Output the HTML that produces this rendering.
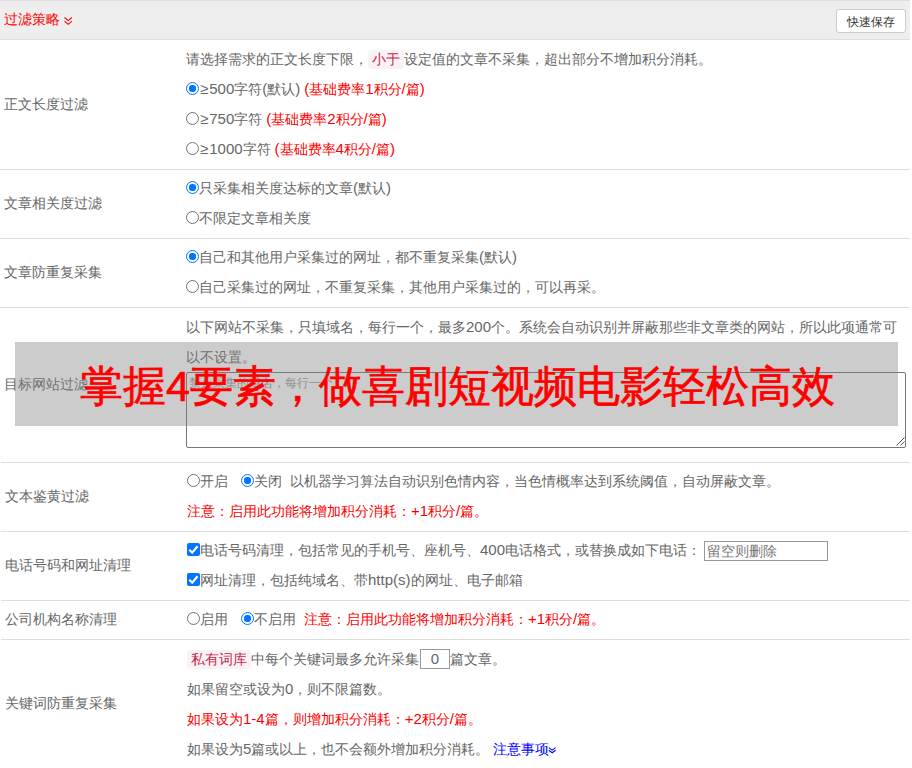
<!DOCTYPE html>
<html><head><meta charset="utf-8">
<style>
*{box-sizing:border-box}
html,body{margin:0;padding:0}
body{width:912px;height:768px;overflow:hidden;background:#fff;position:relative;font-family:"Liberation Sans",sans-serif;font-size:14px;color:#666}
.hdr{position:absolute;left:0;top:0;width:910px;height:40px;background:#eee;border-top:1px solid #ddd;border-bottom:1px solid #ddd}
.hdr .t{position:absolute;left:4px;top:8px;line-height:20px;color:#f00;font-size:14px}
.hdr svg{position:absolute;left:64px;top:16px}
.btn{position:absolute;left:836px;top:8px;width:70px;height:24px;border:1px solid #ccc;border-radius:3px;background:#fff;color:#333;font-size:12px;line-height:25px;text-align:center}
.row{position:absolute;left:0;width:910px;border-bottom:1px solid #ddd}
.lab{position:absolute;left:4px;top:0;bottom:0;display:flex;align-items:center;white-space:nowrap}
.cnt{position:absolute;left:186px;width:722px}
.ln{height:30px;line-height:30px;white-space:nowrap;position:relative}
.red{color:#f00}
i.l{font-style:normal;font-size:15px}
i.g{font-style:normal;margin:0 1px}
.blue{color:#00f}
.rd{display:inline-block;width:13px;height:13px;border-radius:50%;border:1px solid #727272;background:#fff;vertical-align:middle;position:relative;top:-2px}
.rd.on{border:1px solid #0075ff;}
.rd.on:after{content:"";position:absolute;left:2px;top:2px;width:7px;height:7px;border-radius:3px;background:#0075ff}
.cb{display:inline-block;width:13px;height:13px;border-radius:2px;background:#0075ff;vertical-align:middle;position:relative;top:-2px}
.cb svg{position:absolute;left:0;top:0}
code{font-family:"Liberation Sans",sans-serif;font-size:14px;color:#c7254e;background:#f9f2f4;border-radius:4px;padding:0 4px;display:inline-block;height:19px;line-height:19px;vertical-align:top;margin-top:6px}
.ta{position:absolute;left:186px;top:372px;width:720px;height:76px;border:1px solid #767676;border-radius:2px;background:#fff}
.ta .ph{position:absolute;left:2px;top:2px;font-size:12px;line-height:16px;color:#999}
.inp{display:inline-block;border:1px solid #999;background:#fff;vertical-align:top;position:relative;line-height:18px;font-size:14px;color:#666}
.ov{position:absolute;left:15px;top:342px;width:883px;height:84px;background:rgba(128,128,128,0.4);color:#f00;font-size:43px;-webkit-text-stroke:0.7px #f00;line-height:89px;text-indent:2px;text-align:center;white-space:nowrap}
</style></head><body>

<div class="hdr">
  <div class="t">过滤策略</div>
  <svg width="9" height="8" viewBox="0 0 9 8"><path d="M0.5 0.5 L4.2 3.6 L7.9 0.5 M0.5 4.2 L4.2 7.3 L7.9 4.2" fill="none" stroke="#f00" stroke-width="1.1"/></svg>
  <div class="btn">快速保存</div>
</div>

<!-- row1 -->
<div class="row" style="top:40px;height:130px">
  <div class="lab">正文长度过滤</div>
  <div class="cnt" style="top:4px">
    <div class="ln">请选择需求的正文长度下限，<code>小于</code>设定值的文章不采集，超出部分不增加积分消耗。</div>
    <div class="ln"><span class="rd on"></span><i class="l"><i class="g">≥</i>500</i>字符<i class="l">(</i>默认<i class="l">)</i> <span class="red"><i class="l">(</i>基础费率<i class="l">1</i>积分<i class="l">/</i>篇<i class="l">)</i></span></div>
    <div class="ln"><span class="rd"></span><i class="l"><i class="g">≥</i>750</i>字符 <span class="red"><i class="l">(</i>基础费率<i class="l">2</i>积分<i class="l">/</i>篇<i class="l">)</i></span></div>
    <div class="ln"><span class="rd"></span><i class="l"><i class="g">≥</i>1000</i>字符 <span class="red"><i class="l">(</i>基础费率<i class="l">4</i>积分<i class="l">/</i>篇<i class="l">)</i></span></div>
  </div>
</div>

<!-- row2 -->
<div class="row" style="top:170px;height:69px">
  <div class="lab">文章相关度过滤</div>
  <div class="cnt" style="top:3px">
    <div class="ln"><span class="rd on"></span>只采集相关度达标的文章<i class="l">(</i>默认<i class="l">)</i></div>
    <div class="ln"><span class="rd"></span>不限定文章相关度</div>
  </div>
</div>

<!-- row3 -->
<div class="row" style="top:239px;height:69px">
  <div class="lab">文章防重复采集</div>
  <div class="cnt" style="top:3px">
    <div class="ln"><span class="rd on"></span>自己和其他用户采集过的网址，都不重复采集<i class="l">(</i>默认<i class="l">)</i></div>
    <div class="ln"><span class="rd"></span>自己采集过的网址，不重复采集，其他用户采集过的，可以再采。</div>
  </div>
</div>

<!-- row4 -->
<div class="row" style="left:1px;width:909px;top:308px;height:155px">
  <div class="lab" style="left:3px">目标网站过滤</div>
  <div class="cnt" style="top:4px;left:185px">
    <div class="ln">以下网站不采集，只填域名，每行一个，最多<i class="l">200</i>个。系统会自动识别并屏蔽那些非文章类的网站，所以此项通常可</div>
    <div class="ln">以不设置。</div>
  </div>
</div>
<div class="ta"><div class="ph">禁止采集的域名，每行一个</div><svg width="12" height="12" viewBox="0 0 12 12" style="position:absolute;right:-1px;bottom:0px"><path d="M2.5 10.5 L10.5 2.5 M6.5 10.5 L10.5 6.5" stroke="#555" stroke-width="1" fill="none"/></svg></div>

<!-- row5 -->
<div class="row" style="left:1px;width:909px;top:463px;height:69px">
  <div class="lab">文本鉴黄过滤</div>
  <div class="cnt" style="top:3px">
    <div class="ln"><span class="rd"></span>开启<span class="rd on" style="margin-left:13px"></span>关闭<span style="margin-left:8px"></span>以机器学习算法自动识别色情内容，当色情概率达到系统阈值，自动屏蔽文章。</div>
    <div class="ln red">注意：启用此功能将增加积分消耗：<i class="l">+1</i>积分<i class="l">/</i>篇。</div>
  </div>
</div>

<!-- row6 -->
<div class="row" style="left:1px;width:909px;top:532px;height:69px">
  <div class="lab">电话号码和网址清理</div>
  <div class="cnt" style="top:3px">
    <div class="ln"><span class="cb"><svg width="13" height="13" viewBox="0 0 13 13"><path d="M2.3 6.8 L5.2 9.6 L10.6 3.3" fill="none" stroke="#fff" stroke-width="2.2"/></svg></span>电话号码清理，包括常见的手机号、座机号、<i class="l">400</i>电话格式，或替换成如下电话： <span class="inp" style="width:124px;height:20px;margin-top:6px;margin-left:-1px;color:#757575;padding-left:2px">留空则删除</span></div>
    <div class="ln"><span class="cb"><svg width="13" height="13" viewBox="0 0 13 13"><path d="M2.3 6.8 L5.2 9.6 L10.6 3.3" fill="none" stroke="#fff" stroke-width="2.2"/></svg></span>网址清理，包括纯域名、带<i class="l">http(s)</i>的网址、电子邮箱</div>
  </div>
</div>

<!-- row7 -->
<div class="row" style="left:1px;width:909px;top:601px;height:39px">
  <div class="lab">公司机构名称清理</div>
  <div class="cnt" style="top:3px">
    <div class="ln"><span class="rd"></span>启用<span class="rd on" style="margin-left:13px"></span>不启用<span class="red" style="margin-left:8px">注意：启用此功能将增加积分消耗：<i class="l">+1</i>积分<i class="l">/</i>篇。</span></div>
  </div>
</div>

<!-- row8 -->
<div class="row" style="left:1px;width:909px;top:640px;height:140px;border-bottom:0">
  <div class="lab" style="bottom:12px">关键词防重复采集</div>
  <div class="cnt" style="top:4px">
    <div class="ln"><code>私有词库</code>中每个关键词最多允许采集<span class="inp" style="width:30px;height:20px;margin-top:5px;margin-left:1px;text-align:center"><i class="l">0</i></span>篇文章。</div>
    <div class="ln">如果留空或设为<i class="l">0</i>，则不限篇数。</div>
    <div class="ln red">如果设为<i class="l">1-4</i>篇，则增加积分消耗：<i class="l">+2</i>积分<i class="l">/</i>篇。</div>
    <div class="ln">如果设为<i class="l">5</i>篇或以上，也不会额外增加积分消耗。<span class="blue" style="margin-left:4px">注意事项</span><svg width="9" height="7" viewBox="0 0 9 7" style="vertical-align:top;margin-top:13px;margin-left:-1px"><path d="M0.8 0.6 L4.2 3.1 L7.6 0.6 M0.8 3.3 L4.2 5.8 L7.6 3.3" fill="none" stroke="#00f" stroke-width="1.1"/></svg></div>
  </div>
</div>

<div class="ov">掌握4要素，做喜剧短视频电影轻松高效</div>
</body></html>
